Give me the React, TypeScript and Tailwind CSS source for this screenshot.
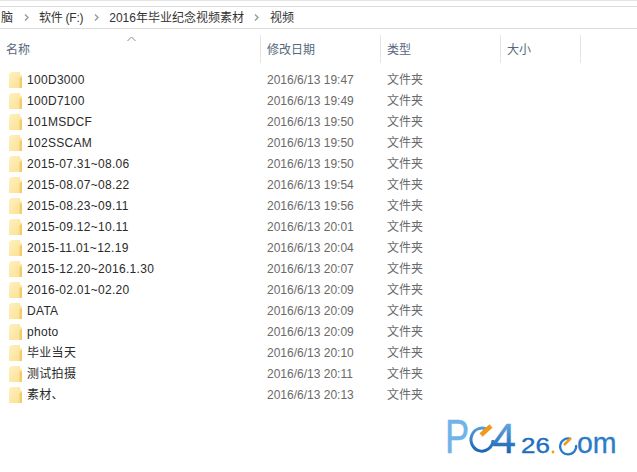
const rows: [string, string][] = [
  ["100D3000", "19:47"],
  ["100D7100", "19:49"],
  ["101MSDCF", "19:50"],
  ["102SSCAM", "19:50"],
  ["2015-07.31~08.06", "19:50"],
  ["2015-08.07~08.22", "19:54"],
  ["2015-08.23~09.11", "19:56"],
  ["2015-09.12~10.11", "20:01"],
  ["2015-11.01~12.19", "20:04"],
  ["2015-12.20~2016.1.30", "20:07"],
  ["2016-02.01~02.20", "20:09"],
  ["DATA", "20:09"],
  ["photo", "20:09"],
  ["毕业当天", "20:10"],
  ["测试拍摄", "20:11"],
  ["素材、", "20:13"],
];

function Folder() {
  return (
    <svg width="13" height="16" viewBox="0 0 13 16" className="shrink-0">
      <defs>
        <linearGradient id="fg" x1="0" y1="0" x2="1" y2="1">
          <stop offset="0" stopColor="#fef0c0" />
          <stop offset="1" stopColor="#fbe08f" />
        </linearGradient>
      </defs>
      <path d="M0 2 L2 0 L11 0 L11 2 L13 4 L13 16 L0 16 Z" fill="url(#fg)" />
      <path d="M10.5 6 L13 5 L13 16 L10.5 16 Z" fill="#f4cc6e" />
    </svg>
  );
}

function Chevron() {
  return (
    <span className="w-[26px] flex justify-center">
      <svg width="5" height="7" viewBox="0 0 5 7">
        <path d="M1 0.5 L4 3.5 L1 6.5" fill="none" stroke="#9a9a9a" strokeWidth="1.4" />
      </svg>
    </span>
  );
}

function Logo() {
  return (
    <svg width="190" height="70" viewBox="0 -10 190 70">
      <defs>
        <linearGradient id="lg" gradientUnits="userSpaceOnUse" x1="0" y1="8" x2="0" y2="44">
          <stop offset="0" stopColor="#6fb3e8" />
          <stop offset="1" stopColor="#1560b0" />
        </linearGradient>
      </defs>
      <text transform="translate(5 43) scale(0.74 1)" fontFamily="Liberation Sans, sans-serif" fontSize="49" fill="url(#lg)" stroke="url(#lg)" strokeWidth="0.5">P</text>
      <path d="M48 20 A 11 11.5 0 1 0 53 30" fill="none" stroke="url(#lg)" strokeWidth="3" />
      <path d="M41 25 L51 16" stroke="#ef9a1c" strokeWidth="4.5" />
      <text x="52" y="43" fontFamily="Liberation Sans, sans-serif" fontSize="43" fill="url(#lg)" stroke="url(#lg)" strokeWidth="0.4">4</text>
      <text transform="translate(81 43) scale(1.18 1)" fontFamily="Liberation Sans, sans-serif" fontSize="22" fill="#1f6fc0" stroke="#1f6fc0" strokeWidth="0.4">26</text>
      <circle cx="113" cy="42" r="1.4" fill="#ef9a1c" />
      <path d="M131 29 A 8 8 0 1 0 136 35" fill="none" stroke="#2a7cc8" strokeWidth="2.2" />
      <path d="M124 35 L131 28" stroke="#ef9a1c" strokeWidth="2.5" />
      <text transform="translate(137 43) scale(0.95 1)" fontFamily="Liberation Sans, sans-serif" fontSize="30" fill="#2a7cc8" stroke="#2a7cc8" strokeWidth="0.3">om</text>
    </svg>
  );
}

const headCell = "h-[28px] pl-[6px] pt-[2px] flex items-center border-r border-[#e5e5e5]";

export default function App() {
  return (
    <div className="relative w-[637px] h-[472px] bg-white overflow-hidden font-['Liberation_Sans','Noto_Sans_CJK_SC',sans-serif]">
      <div className="h-[6px] border-t border-[#e6e6e6]" />
      <div className="h-[23px] border-y border-[#dcdcdc] flex items-center text-[12px] text-[#333]">
        <span className="ml-[1px]">脑</span>
        <Chevron />
        <span className="tracking-[-0.25px]">软件 (F:)</span>
        <Chevron />
        <span>2016年毕业纪念视频素材</span>
        <Chevron />
        <span>视频</span>
      </div>
      <div className="relative h-[34px] pt-[6px] flex items-start text-[12px] text-[#56687c]">
        <span className="absolute left-[127px] top-[7px] leading-none">
          <svg width="9" height="6" viewBox="0 0 9 6" className="block">
            <path d="M0.5 5 L4.5 1 L8.5 5" fill="none" stroke="#8a8a8a" />
          </svg>
        </span>
        <div className={`w-[261px] ${headCell}`}>名称</div>
        <div className={`w-[120px] ${headCell}`}>修改日期</div>
        <div className={`w-[120px] ${headCell}`}>类型</div>
        <div className={`w-[80px] ${headCell}`}>大小</div>
      </div>
      <div className="mt-[6px]">
        {rows.map(([name, t]) => (
          <div key={name} className="h-[21px] flex items-center text-[12px]">
            <div className="w-[267px] pl-[9px] flex items-center gap-[5px] text-[#2a2a2a]">
              <Folder />
              <span className="tracking-[0.3px]">{name}</span>
            </div>
            <div className="w-[120px] text-[#6a6a6a]">2016/6/13 {t}</div>
            <div className="text-[#6a6a6a]">文件夹</div>
          </div>
        ))}
      </div>
      <div className="absolute left-[440px] top-[400px]">
        <Logo />
      </div>
    </div>
  );
}
